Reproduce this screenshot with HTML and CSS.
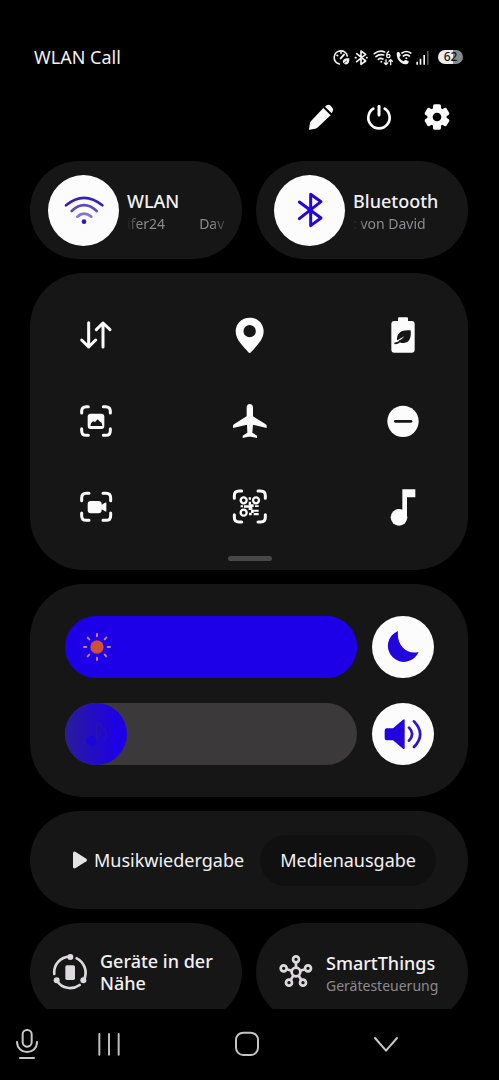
FILE: index.html
```html
<!DOCTYPE html>
<html lang="de">
<head>
<meta charset="utf-8">
<meta name="viewport" content="width=device-width, initial-scale=1">
<title>Schnelleinstellungen</title>
<link rel="stylesheet" href="styles.css">
</head>
<body>
<header class="status">
  <span class="carrier">WLAN Call</span>
  <div class="status-icons">
    <svg width="18" height="17" viewBox="130 55 54 51" fill="none" stroke="#f4f4f4" stroke-width="5" stroke-linecap="round"><path d="M149 100A20 20 0 1 1 173 76M154 66v2M142 74l2 1"/><path d="M153 83l10-11" stroke-width="6"/><path d="M160 96c-2-9 4-14 19-13c1 14-4 20-13 18z" fill="#f4f4f4" stroke="none"/><path d="M157 102l14-11" stroke="#000" stroke-width="2"/></svg>
    <svg width="16" height="17" viewBox="190 55 48 51" fill="none" stroke="#f4f4f4" stroke-width="5" stroke-linecap="round" stroke-linejoin="round"><path d="M201 69l27 22-14 10V61l14 10-27 22"/><path d="M197 81h2M231 81h1"/></svg>
    <svg width="22" height="17" viewBox="244 55 66 51" fill="none" stroke="#f4f4f4" stroke-width="5" stroke-linecap="round"><path d="M254 69q15-12 31-5M259 78q10-9 23-5M266 86q6-5 14-1"/><circle cx="275" cy="93" r="3" fill="#f4f4f4" stroke="none"/><path d="M289 87v14M284 97l5 5 5-5M303 102V88M298 92l5-5 5 5M297 62q-6 4-6 12" stroke-width="4"/><circle cx="296" cy="76" r="5" stroke-width="4"/></svg>
    <svg width="18" height="17" viewBox="316 55 54 51" fill="none" stroke="#f4f4f4" stroke-width="5" stroke-linecap="round"><path d="M321 67q3-5 8-2l4 8q1 3-4 7 4 9 13 12 4-5 7-4l8 4q2 2-3 7-7 5-19-2-15-11-14-30z" fill="#f4f4f4" stroke="none"/><path d="M337 67q13-9 26 0M341 76q9-7 18 0"/><circle cx="350" cy="83" r="3" fill="#f4f4f4" stroke="none"/></svg>
    <svg width="15" height="17" viewBox="376 55 45 51" fill="#f4f4f4"><path d="M380 93h5v9h-5zM390 84h5v18h-5zM401 73h5v29h-5z"/><path d="M412 61h5v41h-5z" fill="#555"/></svg>
    <span class="battery">62</span>
  </div>
</header>

<nav class="actions" aria-label="Aktionen">
  <button aria-label="Bearbeiten"><svg width="28" height="28" viewBox="52 218 84 84" fill="#fcfcfc"><path d="M101 233l22 22-40 37q-3 2-6 3l-17 3q-3 0-2-3l3-17q1-4 4-7zM106 229l5-4q6-4 12 1l5 6q5 5 1 11l-3 6z"/></svg></button>
  <button aria-label="Ein/Aus"><svg width="28" height="28" viewBox="225 218 84 84" fill="none" stroke="#fcfcfc" stroke-width="8" stroke-linecap="round"><path d="M250 235a32 32 0 1 0 34 0"/><path d="M267 228v26" stroke-width="9"/></svg></button>
  <button aria-label="Einstellungen"><svg width="28" height="28" viewBox="-42 -42 84 84" fill="#fcfcfc"><rect x="-12" y="-38" width="24" height="76" rx="5"/><rect x="-12" y="-38" width="24" height="76" rx="5" transform="rotate(60)"/><rect x="-12" y="-38" width="24" height="76" rx="5" transform="rotate(120)"/><circle r="29"/><circle r="13" fill="#000"/></svg></button>
</nav>

<main class="panel">
  <section class="pair">
    <article class="card pill">
      <button class="round large" aria-label="WLAN umschalten"><svg width="46" height="46" viewBox="122 109 138 138" fill="none" stroke-width="8" stroke-linecap="round"><path d="M137 164q54-45 109 0" stroke="#3521b5"/><path d="M154 181q37-35 75 0" stroke="#5b48c6"/><path d="M171 198q20-18 42 0" stroke="#8576d6"/><circle cx="191" cy="213" r="7" fill="#3115c8"/></svg></button>
      <div class="labels two-line"><h2>WLAN</h2><p class="marquee fade-both"><span>ifer24</span><span>Dav</span></p></div>
    </article>
    <article class="card pill">
      <button class="round large" aria-label="Bluetooth umschalten"><svg width="46" height="46" viewBox="125 111 138 138" fill="none" stroke="#2205db" stroke-width="9" stroke-linecap="round" stroke-linejoin="round"><path d="M162 156l65 48-31 23v-94l31 22-65 51"/></svg></button>
      <div class="labels two-line"><h2>Bluetooth</h2><p class="marquee fade-left"><span>: von David</span></p></div>
    </article>
  </section>

  <section class="card toggles">
    <div class="toggle-grid">
      <button aria-label="Mobile Daten"><svg width="36" height="36" viewBox="54 52 108 108" fill="none" stroke="#fcfcfc" stroke-width="9" stroke-linecap="round" stroke-linejoin="round"><path d="M86 69v73M65 121l21 21 21-21M129 142V70M109 90l20-20 21 20"/></svg></button>
      <button aria-label="Standort"><svg width="36" height="36" viewBox="514 55 108 108" fill="#fcfcfc"><path fill-rule="evenodd" d="M567 57c-24 0-42 18-42 41 0 28 25 46 38 63q4 4 8 0c13-17 38-35 38-63 0-23-18-41-42-41zm0 22a18 18 0 1 1 0 37 18 18 0 0 1 0-37z"/></svg></button>
      <button aria-label="Energiesparen"><svg width="36" height="36" viewBox="494 50 108 108" fill="#fcfcfc"><path d="M536 51h24q3 0 3 3v8h11q9 0 9 9v77q0 9-9 9h-52q-9 0-9-9V71q0-9 9-9h11v-8q0-3 3-3z"/><path d="M571 90c2 21-2 37-20 38-8 1-13-2-16-7 6-2 12-7 17-13-7 4-14 9-22 12-2-24 16-33 41-30z" fill="#171617"/><path d="M524 129q8 0 15-6" fill="none" stroke="#171617" stroke-width="5" stroke-linecap="round"/></svg></button>
      <button aria-label="Screenshot"><svg width="36" height="36" viewBox="54 307 108 108" fill="none" stroke="#fcfcfc" stroke-width="9" stroke-linecap="round"><path d="M65 337v-5q0-14 14-14h6M130 318h7q14 0 14 14v5M151 384v6q0 14-14 14h-7M85 404h-6q-14 0-14-14v-6"/><rect x="83" y="339" width="50" height="46" rx="9" fill="#fcfcfc" stroke="none"/><path d="M91 376l3-10 5-4 6 2 8-8 8 8 4 2 2 10z" fill="#171617" stroke="none"/></svg></button>
      <button aria-label="Flugmodus"><svg width="36" height="36" viewBox="514 308 108 108" fill="#fcfcfc"><path d="M567 311c-6 0-9 5-9 10v27l-36 22q-5 3-5 6v7l42-10 1 24-14 9v7l17-4h9l17 4v-7l-14-9 2-24 41 10v-7q0-3-5-6l-36-22v-27c0-5-4-10-10-10z"/></svg></button>
      <button aria-label="Nicht stören"><svg width="36" height="36" viewBox="495 308 108 108"><circle cx="549" cy="363" r="47" fill="#fcfcfc"/><path d="M526 363h47" stroke="#171617" stroke-width="8" stroke-linecap="round"/></svg></button>
      <button aria-label="Bildschirmaufnahme"><svg width="36" height="36" viewBox="54 57 108 108" fill="none" stroke="#fcfcfc" stroke-width="9" stroke-linecap="round"><path d="M65 92v-8q0-14 14-14h8M129 70h9q14 0 14 14v8M152 129v8q0 14-14 14h-9M87 151h-8q-14 0-14-14v-8"/><path d="M92 93h23q10 0 10 10v1l10-6q4-2 4 2v22q0 4-4 2l-10-6v2q0 10-10 10H92q-9 0-9-10v-17q0-10 9-10z" fill="#fcfcfc" stroke="none"/></svg></button>
      <button aria-label="QR-Code scannen"><svg width="36" height="36" viewBox="514 55 108 108" fill="none" stroke="#fcfcfc" stroke-width="9" stroke-linecap="round"><path d="M521 83v-8q0-14 14-14h8M592 61h8q14 0 14 14v8M614 132v8q0 14-14 14h-8M543 154h-8q-14 0-14-14v-8"/><g stroke-width="7"><circle cx="549" cy="89" r="9"/><circle cx="586" cy="89" r="9"/><circle cx="549" cy="126" r="9"/></g><path d="M564 80h7v7h-7zM564 93h7v8h8v8h15v-5h-11v5h-8v8h19v6h-15v4h15v7h-15v-7h-6v7h-8v-8h6v-8h-7v-7h-14v-7h14zM540 104h7v6h-7z" fill="#fcfcfc" stroke="none"/></svg></button>
      <button aria-label="Ton"><svg width="36" height="37" viewBox="494 53 108 111" fill="#fcfcfc"><path d="M546 54h39v24h-25v60h-14z"/><circle cx="536" cy="138" r="25"/></svg></button>
    </div>
    <div class="handle"></div>
  </section>

  <section class="card sliders">
    <div class="slider-row">
      <div class="slider">
        <input class="brightness" type="range" min="0" max="100" value="100" aria-label="Helligkeit">
        <svg class="slider-icon" width="30" height="30" viewBox="-45 -45 90 90"><circle r="20" fill="#cf5038"/><path d="M0-39v7M0 32v7M-39 0h7M32 0h7M-28-28l5 5M23 23l5 5M28-28l-5 5M-23 23l-5 5" stroke="#d3748a" stroke-width="6" stroke-linecap="round"/></svg>
      </div>
      <button class="round" aria-label="Dunkelmodus"><svg width="36" height="36" viewBox="135 161 108 108" fill="#2204dc"><path d="M174 167a48 48 0 1 0 62 63c-37 9-67-22-62-63z"/></svg></button>
    </div>
    <div class="slider-row">
      <div class="slider">
        <input class="volume" type="range" min="0" max="100" value="0" aria-label="Lautstärke">
        <svg class="slider-icon" width="30" height="30" viewBox="188 432 90 90"><circle cx="217" cy="498" r="15" fill="#1c04dc"/><path d="M232 499v-54h9c3 16 21 15 20 35-1 11-5 15-8 18" fill="none" stroke="#2a16a4" stroke-width="4"/></svg>
      </div>
      <button class="round" aria-label="Ton umschalten"><svg width="40" height="36" viewBox="130 421 120 108" fill="#2204dc"><path d="M141 458h19l30-26q5-3 5 2v83q0 5-5 2l-30-25h-19q-6 0-6-7v-22q0-7 6-7z"/><path d="M208 456q19 19 0 39M223 437c25 26 25 51 0 77" fill="none" stroke="#2c13cc" stroke-width="8" stroke-linecap="round"/></svg></button>
    </div>
  </section>

  <section class="card media">
    <button class="play"><svg width="16" height="20" viewBox="158 148 48 60" fill="#e4e3e5"><path d="M161 159q0-9 8-5l32 20q5 4 0 8l-32 20q-8 4-8-4z"/></svg>Musikwiedergabe</button>
    <button class="output">Medienausgabe</button>
  </section>

  <section class="pair">
    <article class="card pill device">
      <svg width="36" height="36" viewBox="156 116 108 108" fill="none" stroke="#dcdadd" stroke-width="8" stroke-linecap="round"><path d="M163 176a47 47 0 0 1 46-52M230 129a48 48 0 0 1 22 64M239 209a48 48 0 0 1-68-12"/><g fill="#dcdadd" stroke="none"><circle cx="211" cy="125" r="9"/><circle cx="170" cy="195" r="9"/><circle cx="250" cy="195" r="9"/><rect x="196" y="150" width="29" height="44" rx="5"/></g></svg>
      <div class="labels"><h2>Geräte in der Nähe</h2></div>
    </article>
    <article class="card pill device">
      <svg width="36" height="36" viewBox="832 118 108 108" fill="none" stroke="#dcdadd" stroke-width="8"><circle cx="886" cy="172" r="13"/><circle cx="886" cy="134" r="9"/><circle cx="849" cy="161" r="9"/><circle cx="922" cy="161" r="9"/><circle cx="865" cy="204" r="9"/><circle cx="907" cy="204" r="9"/><path d="M886 143v16M858 164l15 4M913 164l-14 4M870 196l8-13M902 196l-8-13"/></svg>
      <div class="labels two-line"><h2>SmartThings</h2><p>Gerätesteuerung</p></div>
    </article>
  </section>
</main>

<nav class="navbar" aria-label="Navigation">
  <button aria-label="Spracheingabe"><svg width="24" height="32" viewBox="46 341 72 96" fill="none" stroke="#c8c8c8" stroke-width="6" stroke-linecap="round"><rect x="69" y="347" width="27" height="50" rx="13"/><path d="M52 383c1 40 60 40 60 0M61 431h42"/></svg></button>
  <div class="nav-keys">
    <button aria-label="Letzte Apps"><svg width="24" height="24" viewBox="291 350 72 72" stroke="#bdbdbd" stroke-width="6" stroke-linecap="round"><path d="M298 356v62M327 356v62M356 356v62"/></svg></button>
    <button aria-label="Startseite"><svg width="26" height="26" viewBox="707 348 78 78" fill="none" stroke="#c4c4c4" stroke-width="6"><rect x="713" y="353" width="66" height="67" rx="22"/></svg></button>
    <button aria-label="Zurück"><svg width="26" height="24" viewBox="1127 350 78 72" fill="none" stroke="#c8c8c8" stroke-width="6" stroke-linecap="round" stroke-linejoin="round"><path d="M1133 368l33 38 33-38"/></svg></button>
  </div>
</nav>
</body>
</html>
```
FILE: styles.css
```css
* {
  box-sizing: border-box;
}

body {
  display: flex;
  flex-direction: column;
  height: 100vh;
  margin: 0;
  background: #000;
  color: #f2f1f3;
  font-family: "Noto Sans", "Open Sans", sans-serif;
  font-size: 18px;
  line-height: 22px;
}

button {
  display: flex;
  flex: none;
  align-items: center;
  justify-content: center;
  padding: 0;
  border: 0;
  background: none;
  color: inherit;
  font: inherit;
  cursor: pointer;
}

svg {
  display: block;
  flex: none;
}

h2,
p {
  margin: 0;
}

.status {
  display: flex;
  flex: none;
  align-items: center;
  justify-content: space-between;
  padding: 44px 36px 0 34px;
  height: 70px;
}

.status-icons {
  display: flex;
  align-items: center;
  gap: 2px;
}

.battery {
  width: 25px;
  height: 14px;
  margin-left: 6px;
  border-radius: 7px;
  background: linear-gradient(90deg, #ececec 62%, #8a8a8a 62%);
  color: #111;
  font-size: 12px;
  font-weight: 500;
  line-height: 14px;
  text-align: center;
}

.actions {
  display: flex;
  flex: none;
  justify-content: flex-end;
  gap: 30px;
  padding: 33px 48px 30px;
}

.panel {
  display: flex;
  flex: 1;
  flex-direction: column;
  gap: 14px;
  min-height: 0;
  padding: 0 31px 0 30px;
  overflow: hidden;
}

.card {
  flex: none;
  border-radius: 54px;
  background: #171617;
}

.pair {
  display: grid;
  flex: none;
  grid-template-columns: 1fr 1fr;
  gap: 14px;
}

.pill {
  display: flex;
  align-items: center;
  gap: 8px;
  min-width: 0;
  height: 98px;
  padding: 0 18px;
}

.device {
  gap: 12px;
  padding: 0 22px;
}

.labels {
  flex: 1;
  min-width: 0;
}

.two-line {
  padding-top: 4px;
}

.labels h2 {
  font-size: 18px;
  font-weight: 500;
}

.labels p {
  margin-top: 1px;
  color: #8b8a8c;
  font-size: 14px;
}

.marquee {
  display: flex;
  gap: 34px;
  overflow: hidden;
  white-space: nowrap;
}

.fade-both {
  mask-image: linear-gradient(90deg, transparent, #000 12px, #000 84px, transparent 104px);
}

.fade-left {
  mask-image: linear-gradient(90deg, transparent, #000 12px);
}

.round {
  width: 62px;
  height: 62px;
  border-radius: 50%;
  background: #fcfcfc;
}

.large {
  width: 71px;
  height: 71px;
}

.toggles {
  padding: 44px 47px 9px 48px;
}

.toggle-grid {
  display: grid;
  grid-template-columns: repeat(3, 36px);
  grid-auto-rows: 36px;
  justify-content: space-between;
  gap: 50px 0;
}

.handle {
  width: 44px;
  height: 5px;
  margin: 31px auto 0;
  border-radius: 3px;
  background: #484749;
}

.sliders {
  display: flex;
  flex-direction: column;
  gap: 25px;
  padding: 32px 34px 32px 35px;
}

.slider-row {
  display: flex;
  gap: 15px;
}

.slider {
  position: relative;
  flex: 1;
}

.slider input {
  display: block;
  width: 100%;
  height: 62px;
  margin: 0;
  border-radius: 31px;
  appearance: none;
}

.slider input::-webkit-slider-thumb {
  width: 62px;
  height: 62px;
  border-radius: 50%;
  appearance: none;
}

.brightness {
  background: #1d00e8;
}

.brightness::-webkit-slider-thumb {
  background: #1d00e8;
}

.volume {
  background: #3b3939;
}

.volume::-webkit-slider-thumb {
  background: linear-gradient(90deg, #2b1c99, #1d00e8 85%);
}

.slider-icon {
  position: absolute;
  top: 16px;
  left: 17px;
  pointer-events: none;
}

.media {
  display: flex;
  align-items: center;
  justify-content: space-between;
  height: 98px;
  padding: 0 32px 0 42px;
}

.play {
  gap: 6px;
}

.output {
  height: 51px;
  padding: 0 20px;
  border-radius: 26px;
  background: #101010;
}

.navbar {
  display: flex;
  flex: none;
  align-items: center;
  height: 71px;
  padding: 0 20% 2px 15px;
}

.nav-keys {
  display: flex;
  flex: 1;
  align-items: center;
  justify-content: space-between;
  margin-left: 58px;
}
```
